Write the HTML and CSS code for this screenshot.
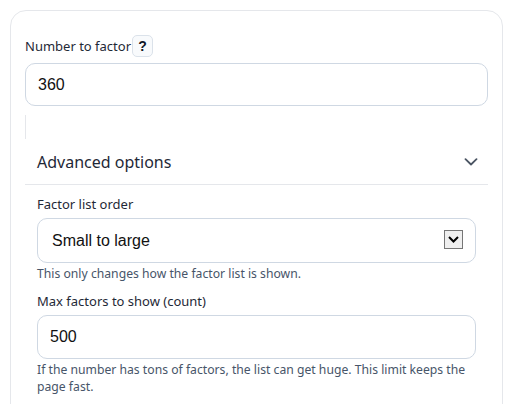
FILE: index.html
```html
<!DOCTYPE html>
<html lang="en">
<head>
<meta charset="utf-8">
<title>Number to factor</title>
<link rel="stylesheet" href="styles.css">
</head>
<body>
<div class="card">
  <div class="label-row">
    <label class="label" for="num">Number to factor</label>
    <span class="help">?</span>
  </div>
  <input id="num" class="input" type="text" value="360">
  <div class="spacer-line"></div>
  <details class="adv" open>
    <summary class="adv-summary">
      <span>Advanced options</span>
      <svg class="chev" width="14" height="8" viewBox="0 0 14 8"><path d="M1.5 1.2 L7 6.5 L12.5 1.2" fill="none" stroke="#4b5563" stroke-width="1.8" stroke-linecap="round" stroke-linejoin="round"/></svg>
    </summary>
    <div class="adv-body">
      <label class="label" for="order">Factor list order</label>
      <div class="select-wrap">
        <select id="order" class="select">
          <option>Small to large</option>
          <option>Large to small</option>
        </select>
        <span class="select-btn"><svg width="11" height="7" viewBox="0 0 11 7"><path d="M1 1 L5.5 5.5 L10 1" fill="none" stroke="#000" stroke-width="2"/></svg></span>
      </div>
      <p class="hint">This only changes how the factor list is shown.</p>
      <label class="label label-2" for="max">Max factors to show (count)</label>
      <input id="max" class="input input-sm" type="text" value="500">
      <p class="hint">If the number has tons of factors, the list can get huge. This limit keeps the page fast.</p>
    </div>
  </details>
</div>
</body>
</html>
```

FILE: styles.css
```css
html, body {
  margin: 0;
  background: #ffffff;
}
body {
  padding: 10px;
  font-family: "Noto Sans", "Open Sans", sans-serif;
  color: #1f2937;
}
.card {
  border: 1px solid #e5e7eb;
  border-radius: 16px;
  padding: 24px 14px 40px;
  min-height: 420px;
  box-sizing: border-box;
}
.label-row {
  display: flex;
  align-items: center;
  height: 22px;
  margin-bottom: 6px;
}
.label {
  display: block;
  font-size: 13px;
  line-height: 17px;
  color: #1f2937;
}
.help {
  display: inline-flex;
  align-items: center;
  justify-content: center;
  box-sizing: border-box;
  width: 21px;
  height: 22px;
  margin-left: 1px;
  border: 1px solid #dbe2ea;
  border-radius: 5px;
  background: #f8fafc;
  font-family: "Liberation Sans", Arial, sans-serif;
  font-weight: bold;
  font-size: 14px;
  color: #111827;
}
.input {
  display: block;
  width: 100%;
  box-sizing: border-box;
  height: 43px;
  padding: 0 12px;
  border: 1px solid #cfd8e3;
  border-radius: 10px;
  background: #fff;
  font-family: "Liberation Sans", Arial, sans-serif;
  font-size: 16px;
  color: #111;
  outline: none;
}
.spacer-line {
  margin-top: 9px;
  height: 24px;
  border-left: 1px solid #e5e7eb;
}
.adv {
  margin-top: 2px;
}
.adv-summary {
  list-style: none;
  display: flex;
  align-items: center;
  justify-content: space-between;
  padding: 10px 10px 11px 12px;
  border-bottom: 1px solid #e5e7eb;
  font-size: 16px;
  line-height: 22px;
  color: #1f2937;
  cursor: pointer;
}
.adv-summary::-webkit-details-marker {
  display: none;
}
.chev {
  display: block;
}
.adv-body {
  padding: 11px 12px 0;
}
.select-wrap {
  position: relative;
  margin-top: 5px;
}
.select {
  display: block;
  width: 100%;
  height: 45px;
  box-sizing: border-box;
  padding: 0 14px;
  border: 1px solid #cfd8e3;
  border-radius: 10px;
  background: #fff;
  font-family: "Liberation Sans", Arial, sans-serif;
  font-size: 16px;
  color: #111;
  appearance: none;
  -webkit-appearance: none;
  outline: none;
}
.select-btn {
  position: absolute;
  right: 13px;
  top: 12px;
  width: 17px;
  height: 17px;
  border: 1px solid #767676;
  background: #efefef;
  display: flex;
  align-items: center;
  justify-content: center;
  pointer-events: none;
}
.hint {
  margin: 2px 0 0;
  font-size: 12.2px;
  line-height: 17px;
  color: #475569;
}
.label-2 {
  margin-top: 11px;
  margin-bottom: 5px;
}
.input-sm {
  height: 44px;
}
```
